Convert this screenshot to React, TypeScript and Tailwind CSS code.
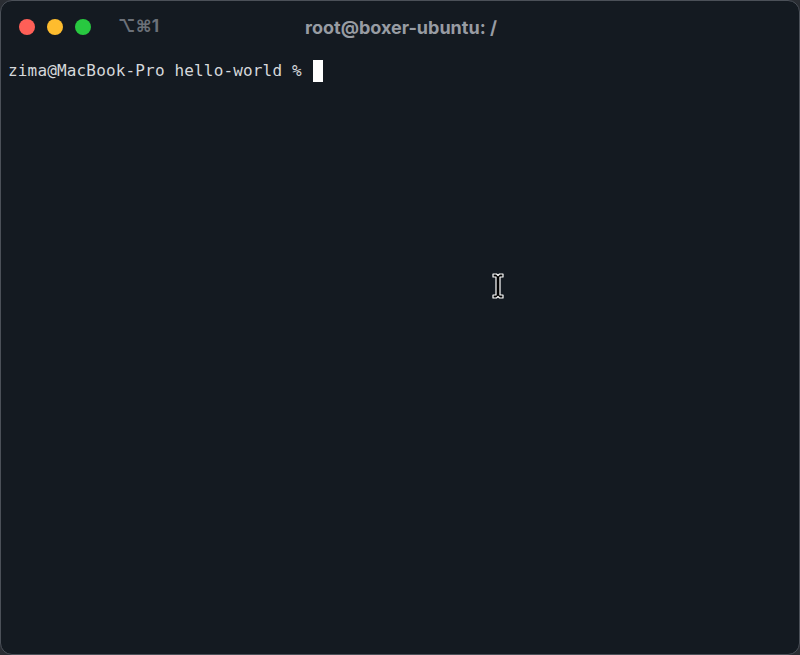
import React from "react";

export default function App() {
  return (
    <div className="w-[800px] h-[655px] bg-[#2a2d33]">
      <div className="relative w-[800px] h-[655px] rounded-[12px] border border-[#4b5058] bg-[#141a21] overflow-hidden">
        <div className="flex items-center h-[52px] pl-[18px] relative">
          <div className="flex items-center gap-[12px]">
            <span className="w-[16px] h-[16px] rounded-full bg-[#ff5f57]" />
            <span className="w-[16px] h-[16px] rounded-full bg-[#febc2e]" />
            <span className="w-[16px] h-[16px] rounded-full bg-[#28c840]" />
          </div>
          <span className="ml-[27px] text-[17px] font-bold text-[#6b7078]" style={{ fontFamily: "Inter, 'DejaVu Sans', sans-serif" }}>⌥⌘1</span>
          <div className="absolute left-0 right-0 top-0 h-[52px] flex items-center justify-center pointer-events-none">
            <span className="text-[18px] font-bold text-[#989ca3] pl-[2px]" style={{ fontFamily: "Inter, 'Liberation Sans', sans-serif" }}>root@boxer-ubuntu: /</span>
          </div>
        </div>
        <div className="px-[7px] flex items-center h-[36px] text-[16px] tracking-[0.16px] text-[#d6d8db]" style={{ fontFamily: "'DejaVu Sans Mono', monospace" }}>
          <span className="whitespace-pre">zima@MacBook-Pro hello-world % </span>
          <span className="inline-block w-[10px] h-[22px] bg-white ml-[1px]" />
        </div>
        <svg className="absolute left-[489px] top-[271px]" width="16" height="28" viewBox="0 0 16 28">
          <path d="M3 2 H6.5 L8 3.5 L9.5 2 H13 V5 H10 V23 H13 V26 H9.5 L8 24.5 L6.5 26 H3 V23 H6 V5 H3 Z" fill="#000" stroke="#fff" strokeWidth="1.2" strokeLinejoin="round" />
        </svg>
      </div>
    </div>
  );
}
